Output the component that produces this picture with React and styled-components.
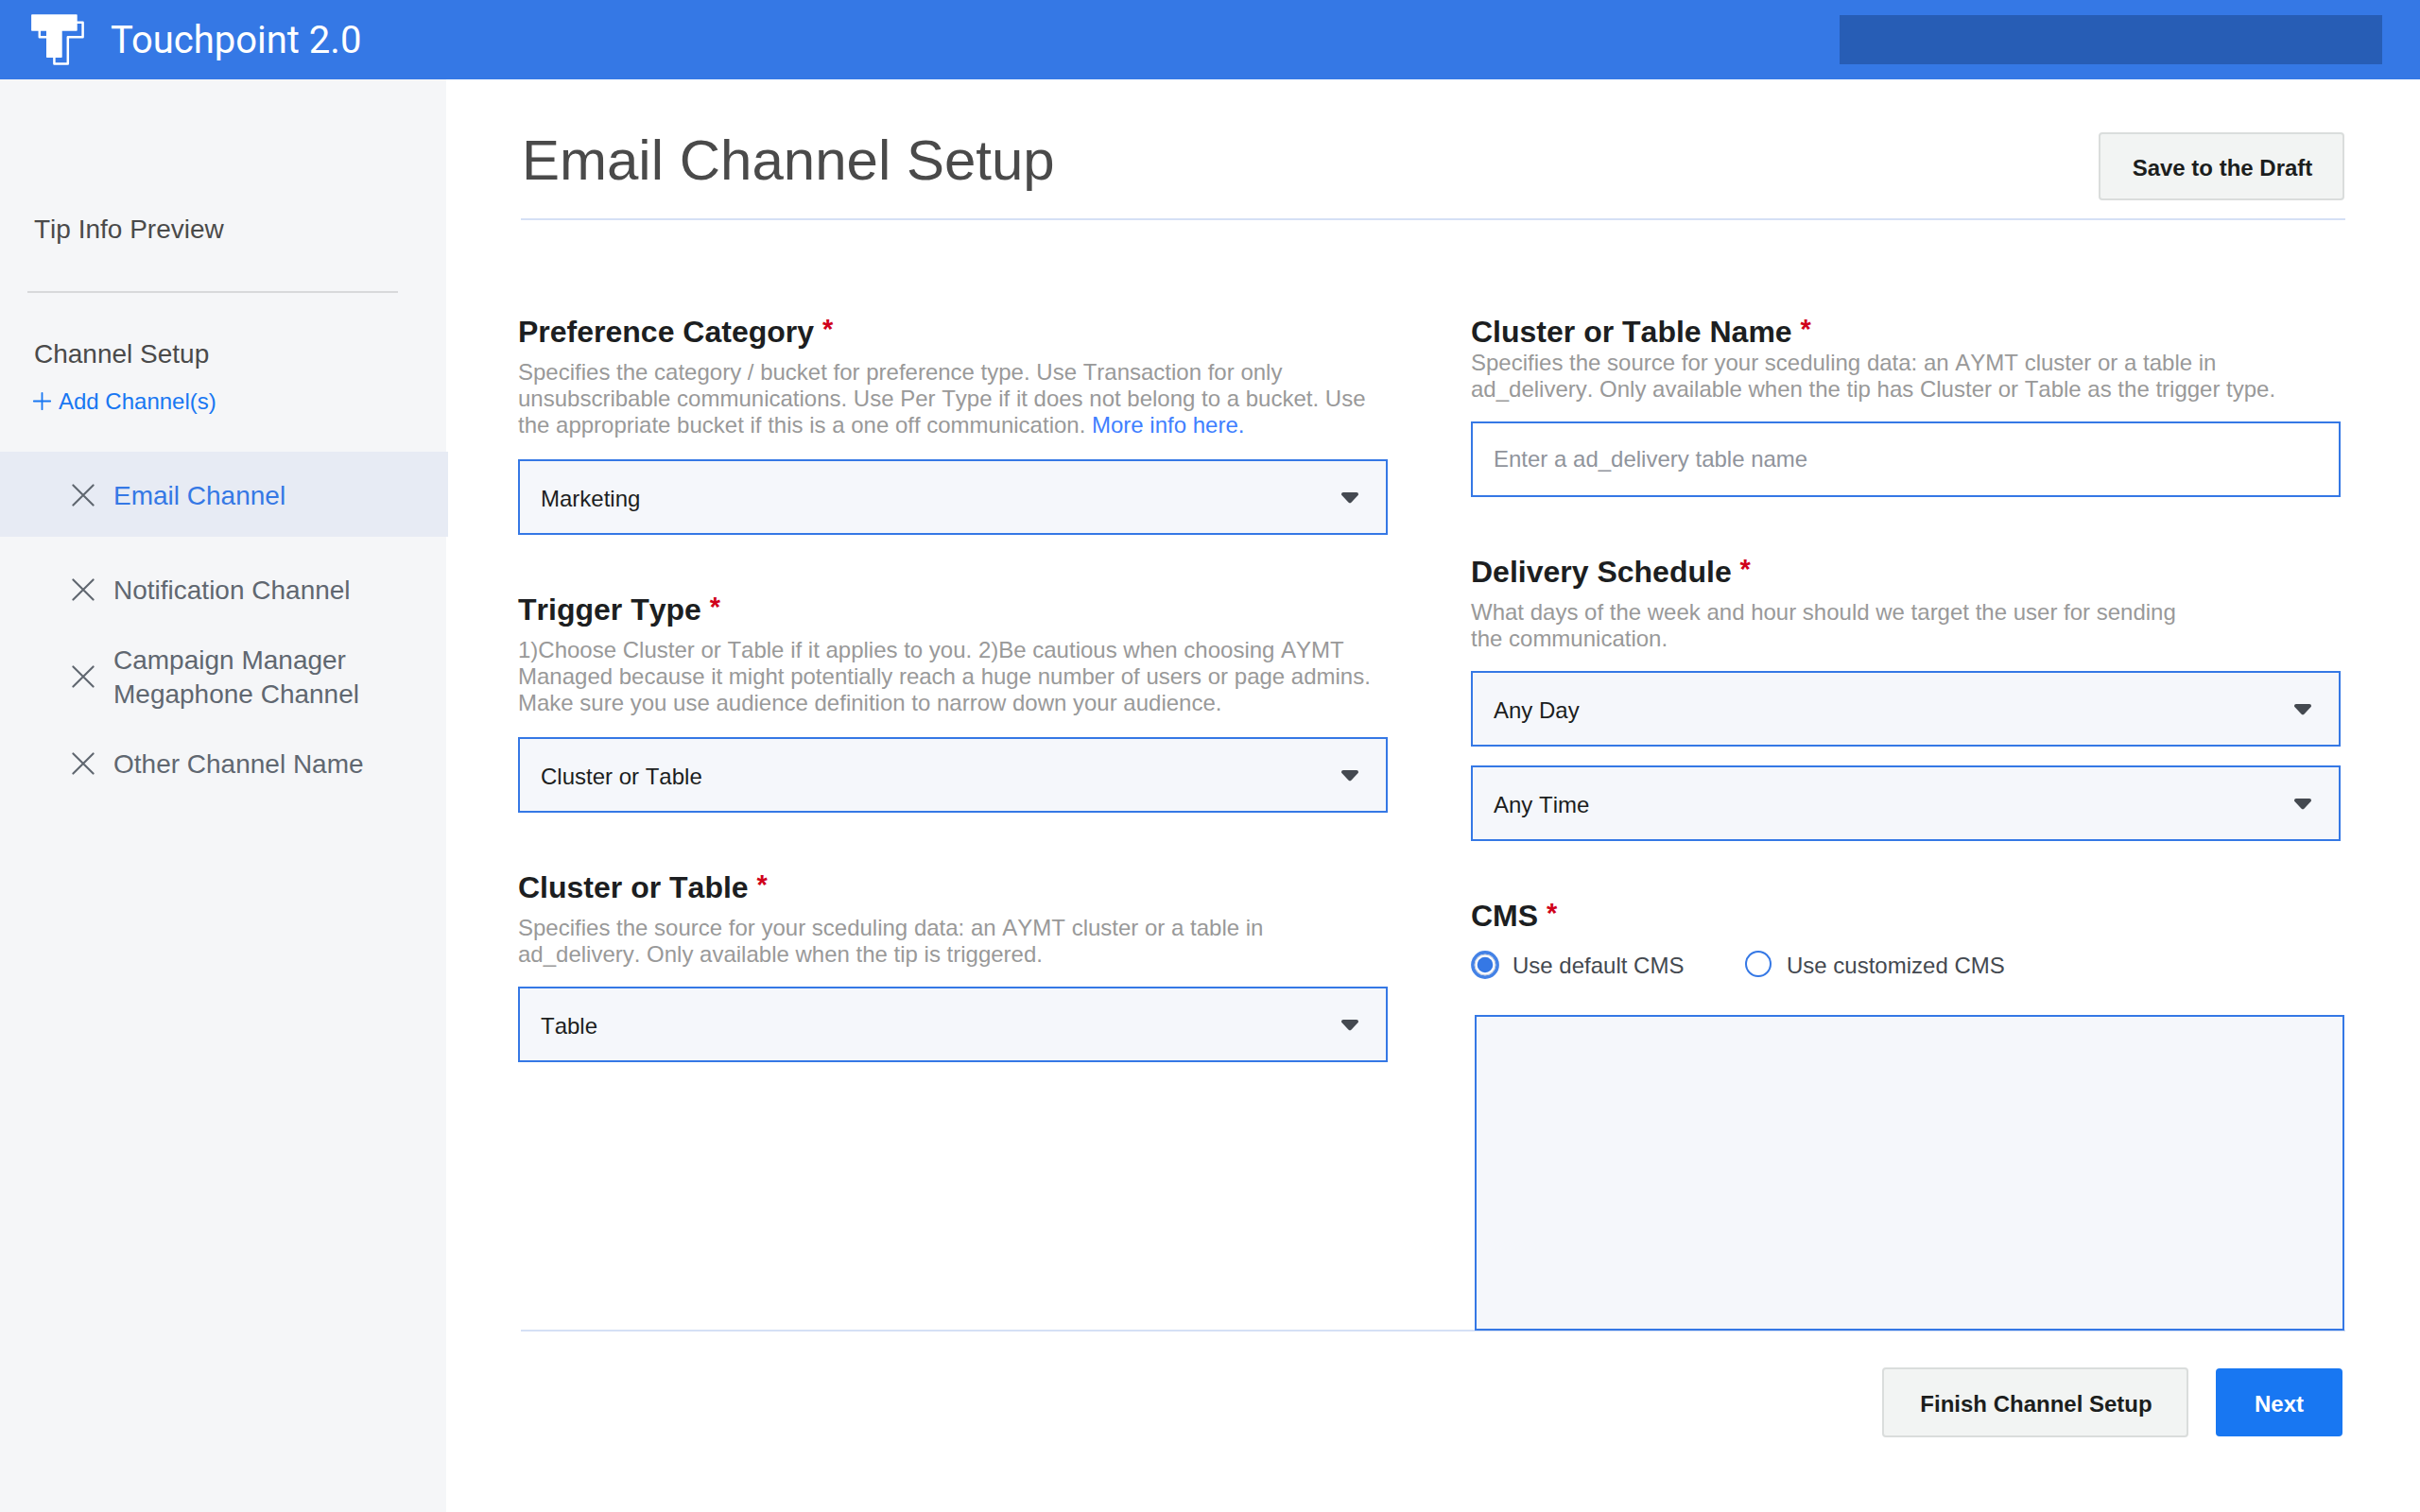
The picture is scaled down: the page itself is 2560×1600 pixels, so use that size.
import React, { useState } from "react";
import styled, { createGlobalStyle, css } from "styled-components";

const GlobalStyle = createGlobalStyle`
  *, *::before, *::after { box-sizing: border-box; }
  body {
    margin: 0;
    background: #ffffff;
    font-family: "Liberation Sans", Arial, Helvetica, sans-serif;
    font-kerning: none;
  }
  button, input, textarea { font-family: inherit; font-kerning: inherit; margin: 0; }
`;

const Page = styled.div`
  display: flex;
  flex-direction: column;
  width: 2560px;
  height: 1600px;
  overflow: hidden;
  background: #ffffff;
`;

/* Top bar */

const TopBar = styled.header`
  display: flex;
  flex: none;
  align-items: center;
  justify-content: space-between;
  height: 84px;
  padding: 0 40px 0 32px;
  background: #3578e5;
`;

const Brand = styled.div`
  display: flex;
  align-items: center;
  gap: 27px;
`;

const LogoMark = styled.svg`
  display: block;
  width: 58px;
  height: 56px;
`;

const BrandName = styled.span`
  padding-top: 1px;
  color: #ffffff;
  font: 400 40px/47px Roboto, sans-serif;
  font-kerning: normal;
  white-space: nowrap;
`;

const SearchBox = styled.div`
  width: 574px;
  height: 52px;
  background: #275db5;
`;

const Body = styled.div`
  display: flex;
  flex: 1;
`;

/* Sidebar */

const Sidebar = styled.aside`
  display: flex;
  flex: none;
  flex-direction: column;
  width: 472px;
  padding-top: 143px;
  background: #f5f6f8;
`;

const SideHeading = styled.div`
  padding-left: 36px;
  color: #4a4a4a;
  font-size: 28px;
  line-height: 31px;
`;

const SideRule = styled.hr`
  flex: none;
  width: 392px;
  height: 2px;
  margin: 50px 0 49px 29px;
  border: 0;
  background: #d8d9db;
`;

const AddChannel = styled.a`
  display: flex;
  align-items: center;
  gap: 7px;
  margin: 21px 0 40px;
  padding-left: 34px;
  color: #1877f2;
  font-size: 24px;
  line-height: 27px;
`;

const PlusIcon = styled.svg`
  width: 21px;
  height: 21px;
`;

const ChannelList = styled.ul`
  display: flex;
  flex-direction: column;
  gap: 38px;
  margin: 0;
  padding: 0;
  list-style: none;
`;

const ChannelItem = styled.li`
  display: flex;
  align-items: center;
  gap: 20px;
  padding-left: 76px;
  color: #606770;
  font-size: 28px;
  line-height: 36px;
  ${(p) =>
    p.$active &&
    css`
      width: 474px;
      margin-bottom: 1px;
      padding-top: 29px;
      padding-bottom: 25px;
      background: #e7ebf4;
      color: #3578e5;
    `}
`;

const ChannelLabel = styled.span`
  max-width: 280px;
`;

const CloseIcon = styled.svg`
  flex: none;
  width: 24px;
  height: 24px;
  margin-bottom: 2px;
`;

/* Main area */

const Main = styled.main`
  display: flex;
  flex: 1;
  flex-direction: column;
  padding: 52px 79px 0 76px;
`;

const TitleRow = styled.div`
  display: flex;
  flex: none;
  align-items: flex-start;
  justify-content: space-between;
  height: 97px;
  margin-left: 3px;
  padding: 0 1px;
  border-bottom: 2px solid #d5e0f5;
`;

const Title = styled.h1`
  margin: 0;
  color: #4a4a4a;
  font-size: 60px;
  font-weight: 400;
  line-height: 67px;
`;

const Button = styled.button`
  width: ${(p) => p.$width}px;
  height: ${(p) => p.$height || 72}px;
  margin-top: ${(p) => p.$drop || 0}px;
  padding: 3px 0 0 ${(p) => (p.$primary ? 0 : 2)}px;
  border: ${(p) => (p.$primary ? "0" : "2px solid #dadddc")};
  border-radius: 4px;
  background: ${(p) => (p.$primary ? "#1877f2" : "#f2f4f3")};
  color: ${(p) => (p.$primary ? "#ffffff" : "#1c1e1d")};
  font-size: 24px;
  font-weight: 700;
  line-height: 27px;
  text-align: center;
`;

const FormColumns = styled.div`
  display: grid;
  grid-template-columns: 920px 920px;
  column-gap: 88px;
  align-items: start;
  padding-top: 100px;
`;

const Column = styled.div`
  display: flex;
  flex-direction: column;
  gap: 61px;
`;

const Field = styled.section`
  display: flex;
  flex-direction: column;
`;

const FieldTitle = styled.h2`
  margin: 0;
  color: #1c1e21;
  font-size: 32px;
  font-weight: 700;
  line-height: 36px;
`;

const Required = styled.span`
  color: #d0021b;
  font-size: 29px;
  line-height: 0;
  vertical-align: 4px;
`;

const Hint = styled.p`
  width: ${(p) => p.$width || 910}px;
  margin: ${(p) => (p.$tight ? 1 : 11)}px 0 ${(p) => p.$below || 20}px;
  color: #999999;
  font-size: 24px;
  line-height: 28px;
`;

const HintLink = styled.a`
  color: #4080ff;
`;

const SelectStack = styled.div`
  display: flex;
  flex-direction: column;
  gap: 20px;
`;

const SelectBox = styled.button`
  display: flex;
  align-items: center;
  justify-content: space-between;
  width: 100%;
  height: 80px;
  padding: 3px 29px 0 22px;
  border: 2px solid #3578e5;
  border-radius: 0;
  background: #f5f7fb;
  color: #1c1e21;
  font-size: 24px;
  line-height: 27px;
  text-align: left;
`;

const Caret = styled.svg`
  width: 18px;
  height: 12px;
  margin-bottom: 1px;
`;

const TextInput = styled.input`
  width: 100%;
  height: 80px;
  padding: 0 22px 1px;
  border: 2px solid #3578e5;
  border-radius: 0;
  background: #ffffff;
  color: #1c1e21;
  font-size: 24px;
  line-height: 27px;
  outline: none;
  &::placeholder {
    color: #90949c;
    opacity: 1;
  }
`;

const RadioRow = styled.div`
  display: grid;
  grid-template-columns: 290px auto;
  justify-content: start;
  height: 30px;
  margin: 19px 0 38px;
`;

const RadioOption = styled.label`
  display: flex;
  align-items: flex-start;
  gap: ${(p) => (p.$checked ? 14 : 16)}px;
`;

const RadioMark = styled.svg`
  flex: none;
  width: ${(p) => (p.$checked ? 30 : 28)}px;
  height: ${(p) => (p.$checked ? 30 : 28)}px;
`;

const RadioText = styled.span`
  padding-top: 2px;
  color: #444950;
  font-size: 24px;
  line-height: 28px;
  white-space: nowrap;
`;

const CmsArea = styled.textarea`
  position: relative;
  z-index: 1;
  display: block;
  width: 920px;
  height: 334px;
  margin-left: 4px;
  padding: 22px;
  border: 2px solid #3578e5;
  border-radius: 0;
  background: #f5f7fb;
  font-size: 24px;
  outline: none;
  resize: none;
`;

const Footer = styled.footer`
  display: flex;
  align-items: center;
  justify-content: flex-end;
  gap: 29px;
  margin: -1px 0 0 3px;
  padding: 38px 3px 0 0;
  border-top: 2px solid #d5e0f5;
`;

function Logo() {
  return (
    <LogoMark viewBox="32 15 58 56" aria-hidden="true">
      <g fill="none" stroke="#ffffff" strokeWidth="2.5" strokeLinejoin="round">
        <path d="M41.8 33V40.2H50" />
        <path d="M57.4 60V68.6H71.8V40.2H87.6V24.8H80" />
      </g>
      <path
        d="M34 16.3H81Q81.7 16.3 81.7 17V33Q81.7 33.7 81 33.7H65.7V61.3Q65.7 62 65 62H49.7Q49 62 49 61.3V33.7H33.8Q33.1 33.7 33.1 33V17Q33.1 16.3 34 16.3Z"
        fill="#ffffff"
      />
    </LogoMark>
  );
}

function Channel({ active, children }) {
  return (
    <ChannelItem $active={active}>
      <CloseIcon viewBox="0 0 24 24" aria-hidden="true">
        <path
          d="M1.4 1.4L22.6 22.6M22.6 1.4L1.4 22.6"
          stroke="#606770"
          strokeWidth="2.1"
          strokeLinecap="round"
        />
      </CloseIcon>
      <ChannelLabel>{children}</ChannelLabel>
    </ChannelItem>
  );
}

function Select({ value }) {
  return (
    <SelectBox type="button">
      {value}
      <Caret viewBox="0 0 18 12" aria-hidden="true">
        <path
          d="M2 0H16C17.8 0 18.6 2 17.4 3.3L10.4 10.7C9.6 11.5 8.4 11.5 7.6 10.7L0.6 3.3C-0.6 2 0.2 0 2 0Z"
          fill="#444950"
        />
      </Caret>
    </SelectBox>
  );
}

function Heading({ children }) {
  return (
    <FieldTitle>
      {children} <Required>*</Required>
    </FieldTitle>
  );
}

function Radio({ checked, onSelect, children }) {
  return (
    <RadioOption $checked={checked} onClick={onSelect}>
      {checked ? (
        <RadioMark $checked viewBox="0 0 30 30" aria-hidden="true">
          <circle cx="15" cy="15" r="13.1" fill="#ffffff" stroke="#4482e6" strokeWidth="3.6" />
          <circle cx="15" cy="15" r="10.9" fill="none" stroke="#b9c6dc" strokeWidth="1" />
          <circle cx="15" cy="15" r="8.3" fill="#3578e5" />
        </RadioMark>
      ) : (
        <RadioMark viewBox="0 0 28 28" aria-hidden="true">
          <circle cx="14" cy="14" r="13" fill="#ffffff" stroke="#3578e5" strokeWidth="2" />
        </RadioMark>
      )}
      <RadioText>{children}</RadioText>
    </RadioOption>
  );
}

export default function App() {
  const [cms, setCms] = useState("default");

  return (
    <>
      <GlobalStyle />
      <Page>
        <TopBar>
          <Brand>
            <Logo />
            <BrandName>Touchpoint 2.0</BrandName>
          </Brand>
          <SearchBox />
        </TopBar>

        <Body>
          <Sidebar>
            <SideHeading>Tip Info Preview</SideHeading>
            <SideRule />
            <SideHeading>Channel Setup</SideHeading>
            <AddChannel>
              <PlusIcon viewBox="0 0 21 21" aria-hidden="true">
                <path
                  d="M10.5 1.8V19.2M1.8 10.5H19.2"
                  stroke="#1877f2"
                  strokeWidth="1.8"
                  strokeLinecap="round"
                />
              </PlusIcon>
              Add Channel(s)
            </AddChannel>
            <ChannelList>
              <Channel active>Email Channel</Channel>
              <Channel>Notification Channel</Channel>
              <Channel>Campaign Manager Megaphone Channel</Channel>
              <Channel>Other Channel Name</Channel>
            </ChannelList>
          </Sidebar>

          <Main>
            <TitleRow>
              <Title>Email Channel Setup</Title>
              <Button type="button" $width={260} $drop={4}>
                Save to the Draft
              </Button>
            </TitleRow>

            <FormColumns>
              <Column>
                <Field>
                  <Heading>Preference Category</Heading>
                  <Hint $below={22}>
                    Specifies the category / bucket for preference type. Use Transaction for only
                    unsubscribable communications. Use Per Type if it does not belong to a bucket.
                    Use the appropriate bucket if this is a one off communication.{" "}
                    <HintLink>More info here.</HintLink>
                  </Hint>
                  <Select value="Marketing" />
                </Field>
                <Field>
                  <Heading>Trigger Type</Heading>
                  <Hint $below={22}>
                    1)Choose Cluster or Table if it applies to you. 2)Be cautious when choosing AYMT
                    Managed because it might potentially reach a huge number of users or page
                    admins. Make sure you use audience definition to narrow down your audience.
                  </Hint>
                  <Select value="Cluster or Table" />
                </Field>
                <Field>
                  <Heading>Cluster or Table</Heading>
                  <Hint $width={860}>
                    Specifies the source for your sceduling data: an AYMT cluster or a table in
                    ad_delivery. Only available when the tip is triggered.
                  </Hint>
                  <Select value="Table" />
                </Field>
              </Column>

              <Column>
                <Field>
                  <Heading>Cluster or Table Name</Heading>
                  <Hint $tight $width={870}>
                    Specifies the source for your sceduling data: an AYMT cluster or a table in
                    ad_delivery. Only available when the tip has Cluster or Table as the trigger
                    type.
                  </Hint>
                  <TextInput placeholder="Enter a ad_delivery table name" />
                </Field>
                <Field>
                  <Heading>Delivery Schedule</Heading>
                  <Hint $width={760}>
                    What days of the week and hour should we target the user for sending the
                    communication.
                  </Hint>
                  <SelectStack>
                    <Select value="Any Day" />
                    <Select value="Any Time" />
                  </SelectStack>
                </Field>
                <Field>
                  <Heading>CMS</Heading>
                  <RadioRow>
                    <Radio checked={cms === "default"} onSelect={() => setCms("default")}>
                      Use default CMS
                    </Radio>
                    <Radio checked={cms === "custom"} onSelect={() => setCms("custom")}>
                      Use customized CMS
                    </Radio>
                  </RadioRow>
                  <CmsArea />
                </Field>
              </Column>
            </FormColumns>

            <Footer>
              <Button type="button" $width={324} $height={74}>
                Finish Channel Setup
              </Button>
              <Button type="button" $primary $width={134}>
                Next
              </Button>
            </Footer>
          </Main>
        </Body>
      </Page>
    </>
  );
}
